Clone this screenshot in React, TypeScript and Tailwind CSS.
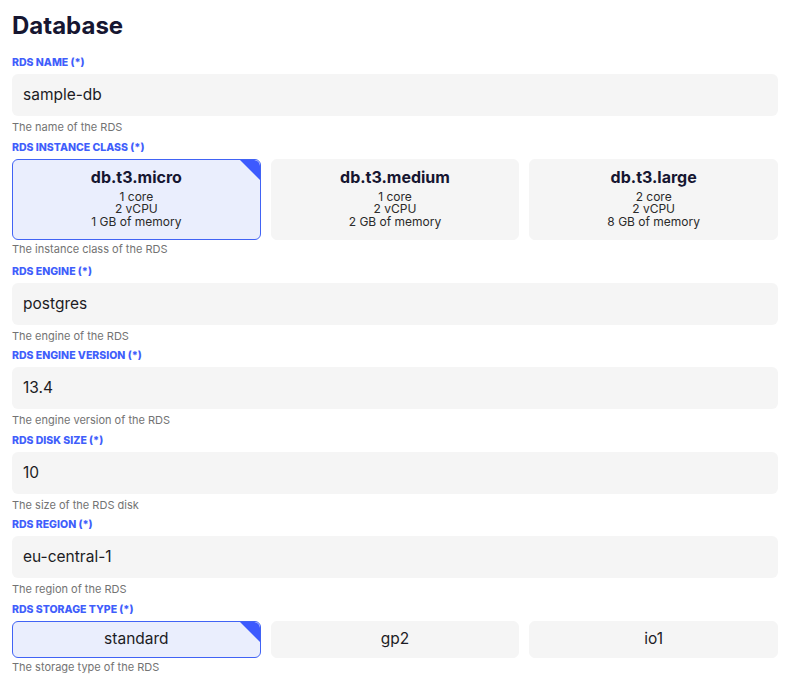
import React from "react";

const font = { fontFamily: "Inter, 'Noto Sans', sans-serif" };

function Label({ children }: { children: React.ReactNode }) {
  return (
    <div className="text-[10.5px] leading-[14px] font-extrabold uppercase text-[#3f5efb] mb-[4px] pt-[1px]">
      {children}
    </div>
  );
}

function Help({ children, className = "mt-[3px]" }: { children: React.ReactNode; className?: string }) {
  return <div className={"text-[11px] leading-[16px] text-[#737373] " + className}>{children}</div>;
}

function Field({ label, value, help }: { label: string; value: string; help: string }) {
  return (
    <div className="flex flex-col mb-[4.5px]">
      <Label>{label}</Label>
      <div className="h-[42px] rounded-[6px] bg-[#f5f5f5] flex items-center px-[11px] text-[15.5px] text-[#1c1c24]">
        {value}
      </div>
      <Help>{help}</Help>
    </div>
  );
}

function Corner() {
  return (
    <svg className="absolute top-0 right-0" width="20" height="20" viewBox="0 0 20 20">
      <path d="M0 0 H14 A6 6 0 0 1 20 6 V20 Z" fill="#3d5afe" />
    </svg>
  );
}

const instances = [
  { name: "db.t3.micro", lines: ["1 core", "2 vCPU", "1 GB of memory"] },
  { name: "db.t3.medium", lines: ["1 core", "2 vCPU", "2 GB of memory"] },
  { name: "db.t3.large", lines: ["2 core", "2 vCPU", "8 GB of memory"] },
];

export default function App() {
  return (
    <div className="bg-white w-[787px] h-[687px] pl-[12px] pr-[9px] pt-[10px] text-[#1c1c24]" style={font}>
      <h1 className="text-[24px] leading-[32px] font-bold text-[#161631] mb-[13px]">Database</h1>

      <Field label="RDS Name (*)" value="sample-db" help="The name of the RDS" />

      <div className="flex flex-col mb-[7px]">
        <Label>RDS Instance Class (*)</Label>
        <div className="grid grid-cols-3 gap-[10px]">
          {instances.map((it, i) => (
            <div
              key={it.name}
              className={
                i === 0
                  ? "relative h-[81px] rounded-[6px] bg-[#eaeefd] border border-[#4163f5] overflow-hidden flex flex-col items-center pt-[8px]"
                  : "relative h-[81px] rounded-[6px] bg-[#f5f5f5] border border-[#f5f5f5] flex flex-col items-center pt-[8px]"
              }
            >
              {i === 0 && <Corner />}
              <div className="text-[16px] leading-[18px] font-bold text-[#161631]">{it.name}</div>
              <div className="mt-[5px] text-[12px] leading-[12.5px] text-[#2a2a2a] text-center">
                {it.lines.map((l) => (
                  <div key={l}>{l}</div>
                ))}
              </div>
            </div>
          ))}
        </div>
        <Help className="mt-[1px]">The instance class of the RDS</Help>
      </div>

      <Field label="RDS Engine (*)" value="postgres" help="The engine of the RDS" />
      <Field label="RDS Engine Version (*)" value="13.4" help="The engine version of the RDS" />
      <Field label="RDS Disk Size (*)" value="10" help="The size of the RDS disk" />
      <Field label="RDS Region (*)" value="eu-central-1" help="The region of the RDS" />

      <div className="flex flex-col">
        <Label>RDS Storage Type (*)</Label>
        <div className="grid grid-cols-3 gap-[10px]">
          {["standard", "gp2", "io1"].map((s, i) => (
            <div
              key={s}
              className={
                i === 0
                  ? "relative h-[37px] rounded-[6px] bg-[#eaeefd] border border-[#4163f5] overflow-hidden flex items-center justify-center text-[15.5px] text-[#1c1c24]"
                  : "relative h-[37px] rounded-[6px] bg-[#f5f5f5] border border-[#f5f5f5] flex items-center justify-center text-[15.5px] text-[#1c1c24]"
              }
            >
              {i === 0 && <Corner />}
              {s}
            </div>
          ))}
        </div>
        <Help className="mt-[1px]">The storage type of the RDS</Help>
      </div>
    </div>
  );
}
